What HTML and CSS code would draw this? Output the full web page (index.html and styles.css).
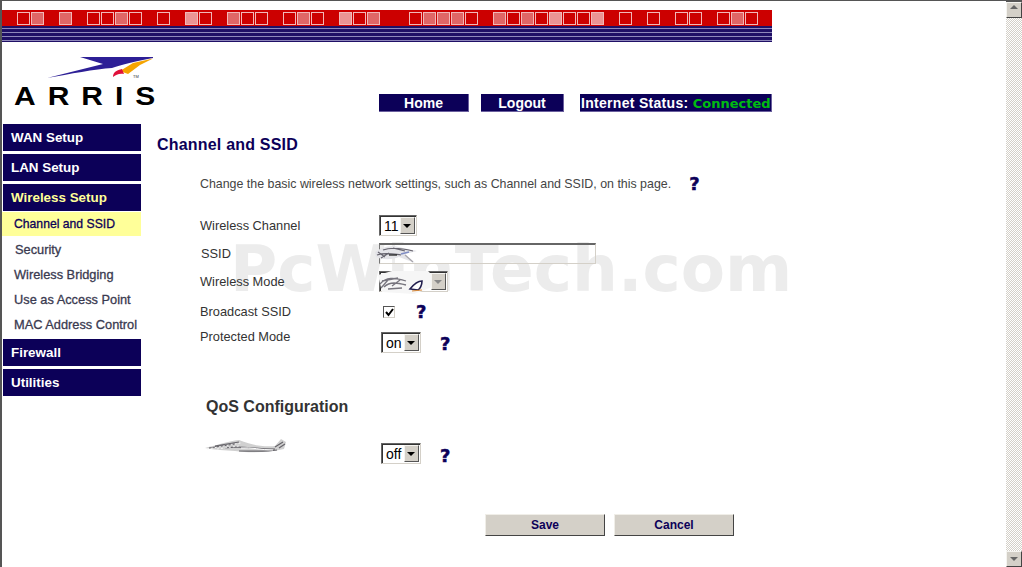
FILE: index.html
```html
<!DOCTYPE html>
<html lang="en">
<head>
    <meta charset="UTF-8">
    <meta name="viewport" content="width=device-width, initial-scale=1.0">
    <title>Channel and SSID</title>
    <link rel="stylesheet" href="styles.css">
</head>
<body>
    <div class="window">
        <div class="page">
            <div class="watermark">PcWinTech.com</div>

            <div class="banner">
                <div class="squares">
                    <i class="sq"></i><i class="sq mid"></i><i class="sq none"></i><i class="sq mid"></i><i class="sq none"></i>
                    <i class="sq"></i><i class="sq"></i><i class="sq mid"></i><i class="sq"></i><i class="sq none"></i>
                    <i class="sq"></i><i class="sq none"></i><i class="sq light"></i><i class="sq"></i><i class="sq none"></i>
                    <i class="sq mid"></i><i class="sq"></i><i class="sq"></i><i class="sq none"></i><i class="sq"></i>
                    <i class="sq mid"></i><i class="sq"></i><i class="sq none"></i><i class="sq light"></i><i class="sq"></i>
                    <i class="sq mid"></i><i class="sq none"></i><i class="sq none"></i><i class="sq"></i><i class="sq mid"></i>
                    <i class="sq mid"></i><i class="sq mid"></i><i class="sq"></i><i class="sq none"></i><i class="sq mid"></i>
                    <i class="sq"></i><i class="sq mid"></i><i class="sq"></i><i class="sq light"></i><i class="sq"></i>
                    <i class="sq"></i><i class="sq light"></i><i class="sq none"></i><i class="sq"></i><i class="sq none"></i>
                    <i class="sq"></i><i class="sq none"></i><i class="sq"></i><i class="sq"></i><i class="sq none"></i>
                    <i class="sq"></i><i class="sq mid"></i><i class="sq"></i>
                </div>
                <div class="stripes"></div>
            </div>

            <div class="header">
                <svg class="logo" width="175" height="69" viewBox="2 0 175 69">
                    <path d="M47 35 L103 21 L80 14 L153 14 L153 15 C135 18 122 22 112 25 C95 26 70 31 47 35Z" fill="#2d1f96"/>
                    <path d="M153 15.5 L140 22 L128 31 L120 28 L133 20Z" fill="#f5a400"/>
                    <path d="M113 34 C113 29 117 27 122 26 L124 31 C119 30 116 32 113 34Z" fill="#e0103a"/>
                    <text class="logo-tm" x="133" y="35">TM</text>
                    <text class="logo-text" transform="translate(14 62) scale(1.2 1)">ARRIS</text>
                </svg>
                <nav class="top-nav">
                    <a class="top-btn home">Home</a>
                    <a class="top-btn logout">Logout</a>
                    <div class="top-btn status">Internet Status: <span class="connected">Connected</span></div>
                </nav>
            </div>

            <div class="content">
                <div class="sidebar">
                    <a class="menu-head">WAN Setup</a>
                    <a class="menu-head">LAN Setup</a>
                    <a class="menu-head open">Wireless Setup</a>
                    <a class="menu-item active">Channel and SSID</a>
                    <a class="menu-item security">Security</a>
                    <a class="menu-item">Wireless Bridging</a>
                    <a class="menu-item">Use as Access Point</a>
                    <a class="menu-item">MAC Address Control</a>
                    <a class="menu-head">Firewall</a>
                    <a class="menu-head">Utilities</a>
                </div>

                <div class="main">
                    <h2>Channel and SSID</h2>
                    <div class="intro">
                        <p>Change the basic wireless network settings, such as Channel and SSID, on this page.</p>
                        <span class="help">?</span>
                    </div>

                    <div class="row channel-row">
                        <label>Wireless Channel</label>
                        <div class="select ch"><span class="val">11</span><span class="drop"></span></div>
                    </div>
                    <div class="row ssid-row">
                        <label class="nudge">SSID</label>
                        <div class="ssid-input">
                            <svg class="smear" width="76" height="19" viewBox="0 0 76 19">
                                <path d="M20 0 L74 0 L74 18 L20 18Z" fill="#fff"/>
                                <path d="M0 7 C8 1 18 0 28 3 L42 6 L30 9 L40 18 L24 12 C16 15 8 15 1 12Z" fill="#e4e4e8"/>
                                <path d="M2 10 C10 7 18 9 26 10 M8 5 C16 2 26 3 38 6 M6 13 L14 8 M18 3 L30 6 M3 7 L10 12" stroke="#66646e" stroke-width="1.2" fill="none"/>
                                <path d="M14 10 L22 10" stroke="#222" stroke-width="1.3"/>
                                <path d="M26 9 L34 7" stroke="#7f8cc4" stroke-width="1.5"/>
                                <path d="M30 10 L38 17" stroke="#a8a6ad" stroke-width="1.2"/>
                            </svg>
                        </div>
                    </div>
                    <div class="row mode-row">
                        <label>Wireless Mode</label>
                        <div class="select mode">
                            <svg class="mode-smear smear" width="60" height="23" viewBox="0 0 60 23">
                                <path d="M0 4 L14 0 L50 0 L56 6 L54 16 L36 23 L4 21Z" fill="#f6f6f6"/>
                                <path d="M2 13 C8 6 16 6 28 10 M6 16 C12 10 20 12 28 14 M4 10 L20 7 M10 18 L24 17 M3 17 L10 9 M14 15 L22 9" stroke="#77757e" stroke-width="1.3" fill="none"/>
                                <path d="M32 18 C36 13 40 10 44 10 C44 14 42 18 40 19Z" fill="#fff" stroke="#23204f" stroke-width="1.6"/>
                                <path d="M34 20 L44 19" stroke="#d98a3a" stroke-width="1.2"/>
                            </svg>
                            <span class="drop disabled"></span>
                        </div>
                    </div>
                    <div class="row broadcast-row">
                        <label>Broadcast SSID</label>
                        <span class="checkbox">
                            <svg width="9" height="9" viewBox="0 0 9 9"><path d="M1 4 L3.5 7 L8 1" stroke="#000" stroke-width="2" fill="none"/></svg>
                        </span>
                        <span class="help">?</span>
                    </div>
                    <div class="row protected-row">
                        <label>Protected Mode</label>
                        <div class="select toggle"><span class="val">on</span><span class="drop"></span></div>
                        <span class="help">?</span>
                    </div>

                    <h3>QoS Configuration</h3>

                    <div class="row qos-row">
                        <div class="label-smear">
                            <svg class="smear" width="82" height="15" viewBox="0 0 82 15">
                                <path d="M0 10 C12 7 24 3 34 2 C46 7 58 9 70 8 L76 1 L81 4 L79 11 C62 15 44 15 30 13 C20 12 10 12 0 10Z" fill="#d0d0d0"/>
                                <path d="M4 10 L30 6 M10 8 L34 4 M20 10 C36 7 46 11 70 11 M34 13 C46 13 60 14 72 12 M70 9 L78 4 M74 10 L80 6" stroke="#66646a" stroke-width="1.2" fill="none"/>
                                <path d="M2 11 L36 5 M12 11 L34 8" stroke="#f4f4f4" stroke-width="1" stroke-dasharray="2 2" fill="none"/>
                                <path d="M36 10 C46 9 56 12 68 12" stroke="#fff" stroke-width="1" fill="none"/>
                            </svg>
                        </div>
                        <div class="select toggle"><span class="val">off</span><span class="drop"></span></div>
                        <span class="help">?</span>
                    </div>

                    <div class="actions">
                        <button>Save</button>
                        <button>Cancel</button>
                    </div>
                </div>
            </div>
        </div>

        <div class="scrollbar">
            <span class="arrow up"></span>
            <span class="track"></span>
            <span class="arrow down"></span>
        </div>
    </div>
</body>
</html>
```

FILE: styles.css
```css
html, body {
    margin: 0;
    padding: 0;
    height: 100%;
    overflow: hidden;
}

body {
    font-family: "Liberation Sans", Arial, sans-serif;
    background-color: white;
    color: #333;
}

.window {
    display: flex;
    height: 567px;
    box-sizing: border-box;
    border-top: 1px solid #555;
    border-left: 2px solid #555;
}

.page {
    position: relative;
    flex: 1;
    min-width: 0;
}

.watermark {
    position: absolute;
    left: 228px;
    top: 233px;
    font-family: "DejaVu Sans", sans-serif;
    font-weight: bold;
    font-size: 64.5px;
    line-height: 70px;
    color: #ececec;
    white-space: nowrap;
}

/* banner */
.banner {
    position: relative;
    width: 770px;
    margin-top: 9px;
}

.squares {
    display: flex;
    gap: 1px;
    height: 16px;
    box-sizing: border-box;
    padding: 2px 0 0 15px;
    background-color: #cc0000;
}

.sq {
    display: block;
    width: 13px;
    height: 13px;
    box-sizing: border-box;
    border: 1px solid #f2b8b8;
}

.sq.mid {
    background-color: #e06666;
}

.sq.light {
    background-color: #eb9494;
}

.sq.none {
    border: none;
}

.stripes {
    height: 16px;
    background: repeating-linear-gradient(to bottom, #1f0f66 0, #1f0f66 2px, #8f88bb 2px, #8f88bb 3px, #1f0f66 3px, #1f0f66 4px);
}

/* header */
.header {
    display: flex;
    align-items: flex-end;
    height: 70px;
}

.logo {
    flex: none;
    margin-right: 202px;
}

.logo-text {
    font-family: "Liberation Sans", Arial, sans-serif;
    font-weight: bold;
    font-size: 25px;
    letter-spacing: 10px;
    fill: #000;
}

.logo-tm {
    font-family: "Liberation Sans", Arial, sans-serif;
    font-size: 4px;
    fill: #333;
}

.top-nav {
    display: flex;
}

.top-btn {
    box-sizing: border-box;
    height: 18px;
    background-color: #0c0058;
    border-right: 1px solid #6a5f9e;
    border-bottom: 1px solid #6a5f9e;
    color: white;
    font-size: 14px;
    font-weight: bold;
    line-height: 18px;
    text-align: center;
    white-space: nowrap;
}

.home {
    width: 90px;
    margin-right: 12px;
}

.logout {
    width: 83px;
    margin-right: 16px;
}

.status {
    width: 192px;
    padding-left: 1px;
    text-align: left;
    letter-spacing: 0.3px;
}

.connected {
    font-family: "DejaVu Sans", sans-serif;
    font-size: 13px;
    letter-spacing: 0;
    color: #00bb11;
}

/* left menu */
.content {
    display: flex;
    position: relative;
}

.sidebar {
    flex: none;
    width: 139px;
    margin-top: 12px;
}

.sidebar a {
    display: block;
    box-sizing: border-box;
}

.menu-head {
    height: 27px;
    margin: 0 0 3px 1px;
    padding-left: 8px;
    background-color: #0c0058;
    color: white;
    font-size: 13.4px;
    font-weight: bold;
    line-height: 27px;
}

.menu-head.open {
    margin-bottom: 1px;
    color: #ffff99;
}

.menu-item {
    height: 25px;
    padding-left: 12px;
    font-size: 12.8px;
    line-height: 25px;
    color: #3a3a50;
    -webkit-text-stroke: 0.3px #3a3a50;
}

.menu-item.active {
    height: 24px;
    background-color: #ffff99;
    color: #0c0058;
    font-size: 12.2px;
    -webkit-text-stroke-color: #0c0058;
    line-height: 25px;
}

.menu-item.active + .menu-item {
    margin-top: 1px;
}

.menu-item.security {
    padding-left: 13px;
}

.menu-item + .menu-head {
    margin-top: 2px;
}

/* main form */
.main {
    position: relative;
    flex: 1;
    padding: 23px 0 0 16px;
}

h2 {
    margin: 0;
    font-size: 16px;
    letter-spacing: 0.2px;
    line-height: 20px;
    color: #0c0058;
}

.intro {
    display: flex;
    gap: 18px;
    margin: 21px 0 0 43px;
}

.intro p {
    margin: 0;
    font-size: 12.4px;
    line-height: 16px;
    color: #444;
}

.row {
    display: flex;
    align-items: flex-start;
    margin-left: 43px;
}

.row label {
    flex: none;
    width: 179px;
    font-size: 12.8px;
    font-weight: normal;
    line-height: 21px;
    color: #333;
}

.row label.nudge {
    width: 178px;
    margin-left: 1px;
}

.channel-row {
    margin-top: 23px;
}

.ssid-row {
    margin-top: 7px;
}

.mode-row {
    margin-top: 7px;
}

.broadcast-row {
    margin-top: 9px;
    height: 20px;
}

.protected-row {
    margin-top: 5px;
}

.qos-row {
    margin-top: 21px;
}

.select {
    display: flex;
    box-sizing: border-box;
    height: 21px;
    padding: 1px;
    background-color: white;
    border: 1px solid #d4d0c8;
    border-top-color: #666;
    border-left-color: #666;
    box-shadow: inset 1px 1px 0 #333;
    color: #000;
    font-size: 14px;
    line-height: 19px;
}

.select .val {
    flex: 1;
    padding-left: 3px;
}

.select.ch {
    width: 38px;
}

.select.mode {
    position: relative;
    width: 69px;
    justify-content: flex-end;
}

.mode-smear {
    position: absolute;
    left: -2px;
    top: -1px;
}

.smear {
    display: block;
    filter: blur(0.4px);
}

.select.toggle {
    width: 40px;
    margin-left: 2px;
}

.protected-row .select {
    margin-top: 6px;
}

.qos-row .select {
    margin-top: 5px;
}

.drop {
    position: relative;
    flex: none;
    width: 15px;
    box-sizing: border-box;
    background-color: #d4d0c8;
    border: 1px solid;
    border-color: #f5f4f0 #555 #555 #f5f4f0;
}

.drop::after {
    content: "";
    position: absolute;
    left: 2px;
    top: 6px;
    border: 4px solid transparent;
    border-top: 4px solid #000;
    border-bottom: none;
}

.drop.disabled::after {
    border-top-color: #888;
}

.ssid-input {
    width: 217px;
    height: 21px;
    box-sizing: border-box;
    border: 1px solid #d4d0c8;
    border-top: 2px solid #666;
    border-left-color: #777;
}

.ssid-input svg {
    margin: 0 0 0 -5px;
}

.checkbox {
    display: flex;
    align-items: center;
    justify-content: center;
    width: 12px;
    height: 12px;
    margin: 5px 0 0 4px;
    background-color: white;
    border-top: 1px solid #555;
    border-left: 1px solid #555;
    border-bottom: 1px solid #d4d0c8;
    border-right: 1px solid #d4d0c8;
    box-sizing: border-box;
}

.help {
    font-family: "DejaVu Sans", sans-serif;
    font-size: 18px;
    font-weight: bold;
    line-height: 16px;
    color: #0c0058;
    -webkit-text-stroke: 0.5px #0c0058;
}

.broadcast-row .help {
    margin: 3px 0 0 21px;
}

.protected-row .help,
.qos-row .help {
    margin: 10px 0 0 19px;
}

h3 {
    margin: 44px 0 0 49px;
    font-size: 16px;
    line-height: 20px;
    color: #333;
}

.label-smear {
    flex: none;
    width: 174px;
    height: 15px;
    margin-left: 5px;
}

.actions {
    display: flex;
    gap: 9px;
    margin: 50px 0 0 328px;
}

.actions button {
    width: 120px;
    height: 22px;
    padding: 0;
    background-color: #d4d0c8;
    border: 1px solid;
    border-color: #f0eee8 #444 #444 #f0eee8;
    color: #0c0058;
    font-family: "Liberation Sans", Arial, sans-serif;
    font-size: 12px;
    font-weight: bold;
}

/* scrollbar */
.scrollbar {
    display: flex;
    flex: none;
    flex-direction: column;
    width: 16px;
    border-top: 1px solid #555;
}

.track {
    flex: 1;
    background-color: #fff;
    background-image: conic-gradient(#d4d0c8 25%, #fff 0 50%, #d4d0c8 0 75%, #fff 0);
    background-size: 2px 2px;
}

.arrow {
    position: relative;
    flex: none;
    height: 16px;
    box-sizing: border-box;
    background-color: #d4d0c8;
    border: 1px solid;
    border-color: #f5f4f0 #444 #444 #f5f4f0;
}

.arrow::after {
    content: "";
    position: absolute;
    left: 3px;
    border: 4px solid transparent;
}

.arrow.up::after {
    top: 2px;
    border-bottom-color: #666;
    border-top: none;
}

.arrow.down::after {
    top: 5px;
    border-top-color: #666;
    border-bottom: none;
}
```
